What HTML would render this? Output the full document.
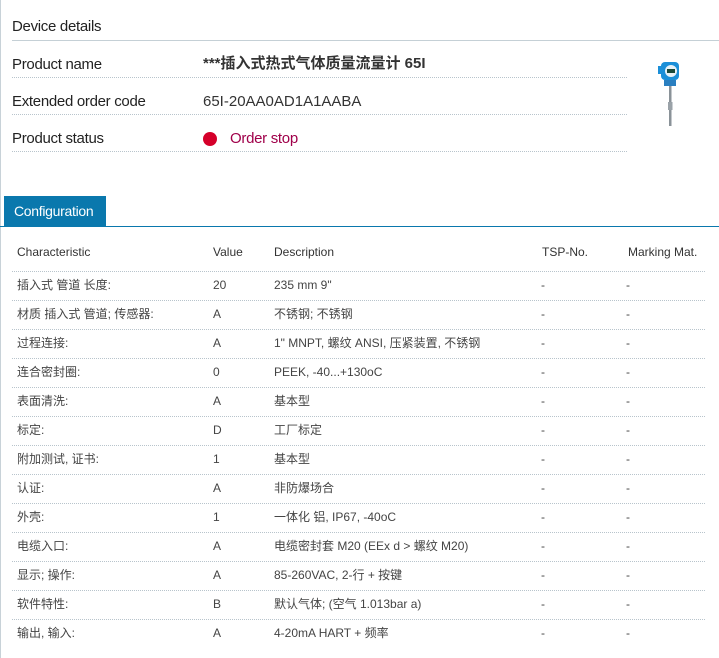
<!DOCTYPE html>
<html><head><meta charset="utf-8"><style>
body{margin:0;width:719px;height:658px;background:#fff;position:relative;overflow:hidden;font-family:"Liberation Sans","Noto Sans CJK SC",sans-serif;color:#333}
.a{position:absolute;white-space:nowrap}
.h{font-size:15px;color:#222;line-height:18px;letter-spacing:-0.3px}
.dl{position:absolute;left:12px;width:615px;border-top:1px dotted #b8c4cc;height:0}
.tr{position:absolute;left:12px;width:693px;border-top:1px dotted #b8c4cc;height:0}
.c{position:absolute;font-size:12px;line-height:14px;height:14px;color:#444;white-space:nowrap;font-family:"Liberation Sans","Noto Sans CJK SC",sans-serif}
</style></head><body>
<div class="a" style="left:0;top:0;width:1px;height:658px;background:#c8d2d8"></div>
<div class="a h" style="left:12px;top:18px">Device details</div>
<div class="a" style="left:12px;top:40px;width:707px;height:1px;background:#c5d0d6"></div>
<div class="a h" style="left:12px;top:56px">Product name</div>
<div class="a" style="left:203px;top:55px;font-size:15px;line-height:18px;font-weight:bold;color:#333">***插入式热式气体质量流量计 65I</div>
<div class="dl" style="top:77px"></div>
<div class="a h" style="left:12px;top:93px">Extended order code</div>
<div class="a" style="left:203px;top:93px;font-size:15px;line-height:18px;color:#333">65I-20AA0AD1A1AABA</div>
<div class="dl" style="top:114px"></div>
<div class="a h" style="left:12px;top:130px">Product status</div>
<div class="a" style="left:203px;top:132px;width:14px;height:14px;border-radius:50%;background:#d5002a"></div>
<div class="a h" style="left:230px;top:130px;color:#a0004a">Order stop</div>
<div class="dl" style="top:151px"></div>
<svg class="a" style="left:652px;top:58px" width="36" height="70" viewBox="0 0 36 70">
<rect x="9" y="4" width="18" height="18" rx="4" fill="#1b8fd8"/>
<rect x="6" y="8" width="4" height="8" fill="#1b8fd8"/>
<circle cx="19" cy="13" r="6" fill="#e8f2f8"/><rect x="15" y="11" width="8" height="4" fill="#1a4a3a"/>
<rect x="12" y="22" width="12" height="6" fill="#2a7fc0"/>
<rect x="17" y="28" width="2.5" height="40" fill="#8a9298"/>
<rect x="16" y="44" width="4.5" height="8" fill="#9aa2a8"/>
</svg>
<div class="a" style="left:4px;top:196px;width:102px;height:30px;background:#0a78ad"></div>
<div class="a" style="left:14px;top:203px;font-size:14px;line-height:16px;color:#fff;letter-spacing:-0.3px">Configuration</div>
<div class="a" style="left:0;top:226px;width:719px;height:1px;background:#0a78ad"></div>
<div class="c" style="left:17px;top:245px;color:#333">Characteristic</div>
<div class="c" style="left:213px;top:245px;color:#333">Value</div>
<div class="c" style="left:274px;top:245px;color:#333">Description</div>
<div class="c" style="left:542px;top:245px;color:#333">TSP-No.</div>
<div class="c" style="left:628px;top:245px;color:#333">Marking Mat.</div>
<div id="rows"></div>
<script>
var r=[["插入式 管道 长度:","20","235 mm 9\""],["材质 插入式 管道; 传感器:","A","不锈钢; 不锈钢"],["过程连接:","A","1\" MNPT, 螺纹 ANSI, 压紧装置, 不锈钢"],["连合密封圈:","0","PEEK, -40...+130oC"],["表面清洗:","A","基本型"],["标定:","D","工厂标定"],["附加测试, 证书:","1","基本型"],["认证:","A","非防爆场合"],["外壳:","1","一体化 铝, IP67, -40oC"],["电缆入口:","A","电缆密封套 M20 (EEx d > 螺纹 M20)"],["显示; 操作:","A","85-260VAC, 2-行 + 按键"],["软件特性:","B","默认气体; (空气 1.013bar a)"],["输出, 输入:","A","4-20mA HART + 频率"]];
var h='';
for(var i=0;i<r.length;i++){var y=271+i*29;if(i<12||true)h+='<div class="tr" style="top:'+y+'px"></div>';var t=y+7;
h+='<div class="c" style="left:17px;top:'+t+'px">'+r[i][0]+'</div><div class="c" style="left:213px;top:'+t+'px">'+r[i][1]+'</div><div class="c" style="left:274px;top:'+t+'px">'+r[i][2]+'</div><div class="c" style="left:541px;top:'+t+'px">-</div><div class="c" style="left:626px;top:'+t+'px">-</div>';}
document.getElementById('rows').innerHTML=h;
</script>
</body></html>
